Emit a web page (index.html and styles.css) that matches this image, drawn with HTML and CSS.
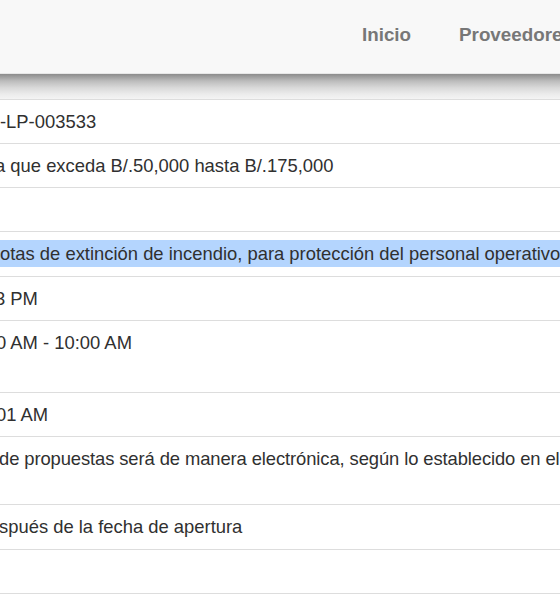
FILE: index.html
```html
<!DOCTYPE html>
<html lang="es">
<head>
<meta charset="utf-8">
<title>Detalle del acto público</title>
<link rel="stylesheet" href="styles.css">
</head>
<body>
<header class="navbar">
  <nav class="nav">
    <a class="nav-link" href="#">Inicio</a>
    <a class="nav-link" href="#">Proveedores</a>
  </nav>
</header>
<div class="shade"></div>
<main class="detail">
  <div class="row"><span class="val">-LP-003533</span></div>
  <div class="row clip-5"><span class="val">a que exceda B/.50,000 hasta B/.175,000</span></div>
  <div class="row"><span class="val"></span></div>
  <div class="row row-selected"><span class="val selected">otas de extinción de incendio, para protección del personal operativo</span></div>
  <div class="row clip-5"><span class="val">3 PM</span></div>
  <div class="row row-double clip-4"><span class="val">0 AM - 10:00 AM</span></div>
  <div class="row clip-4"><span class="val">01 AM</span></div>
  <div class="row row-wrap clip-1"><span class="val">de propuestas será de manera electrónica, según lo establecido en el</span></div>
  <div class="row row-loose clip-1"><span class="val">spués de la fecha de apertura</span></div>
  <div class="row"><span class="val"></span></div>
  <div class="row"><span class="val"></span></div>
</main>
</body>
</html>
```

FILE: styles.css
```css
html, body {
  margin: 0;
  padding: 0;
  overflow: hidden;
  background: #ffffff;
}

body {
  width: 560px;
  height: 600px;
  font-family: "Liberation Sans", Arial, Helvetica, sans-serif;
  color: #303030;
}

.navbar {
  height: 73px;
  background: #f8f8f8;
  border-bottom: 1px solid #e7e7e7;
  display: flex;
  align-items: center;
  overflow: hidden;
}

.nav {
  display: flex;
  flex: none;
  margin-left: 338px;
  white-space: nowrap;
}

.nav-link {
  padding: 0 24px 5px;
  font-size: 18.8px;
  line-height: 27px;
  font-weight: bold;
  color: #777777;
  text-decoration: none;
}

.shade {
  height: 25px;
  background: linear-gradient(to bottom, #8c8c8c 0%, #bcbcbc 28%, #d9d9d9 55%, #ebebeb 80%, #f4f4f4 100%);
}

.detail {
  background: #ffffff;
}

.row {
  border-top: 1px solid #dddddd;
  padding: 8px 0;
  min-height: 27px;
  font-size: 18.4px;
  line-height: 27px;
  white-space: nowrap;
  overflow: hidden;
}

.row-selected {
  padding-bottom: 9px;
}

.row-loose {
  padding-bottom: 9px;
}

.row-double {
  min-height: 55px;
}

.row-wrap {
  min-height: 51px;
  letter-spacing: -0.1px;
}

.clip-1 { text-indent: -1px; }
.clip-4 { text-indent: -4px; }
.clip-5 { text-indent: -5px; }

.selected {
  display: block;
  background: #b4d5fe;
}
```
